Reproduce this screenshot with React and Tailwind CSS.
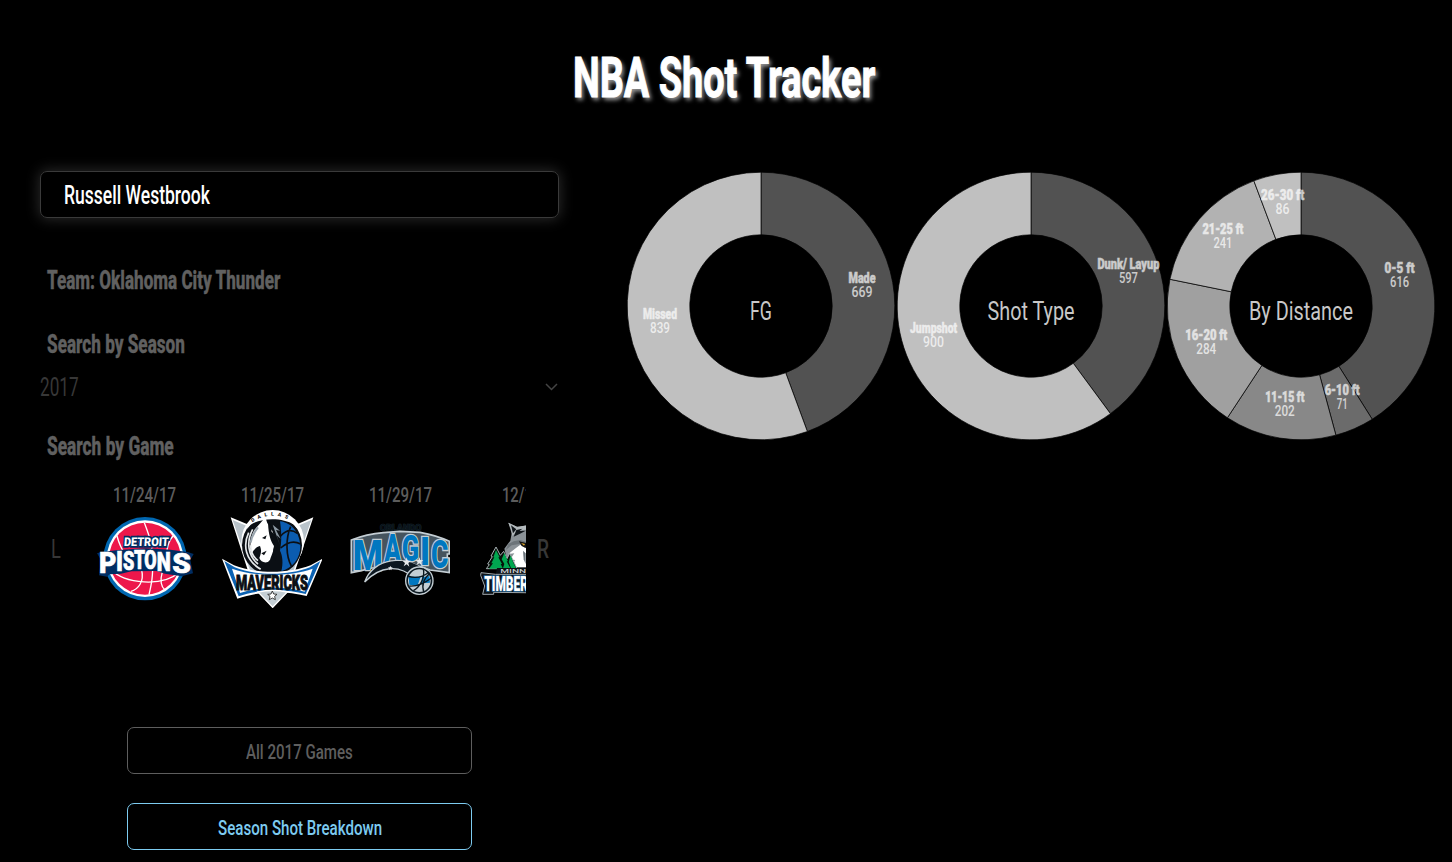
import { useLayoutEffect, useRef, useState } from "react";

/* One line of text condensed horizontally to a given width. */
function Condensed({ children, width, className = "" }) {
  const ref = useRef(null);
  const [scale, setScale] = useState(1);
  useLayoutEffect(() => {
    setScale(width / ref.current.offsetWidth);
  }, [width, children]);
  return (
    <span className={`block whitespace-nowrap ${className}`} style={{ width }}>
      <span ref={ref} className="inline-block origin-left" style={{ transform: `scaleX(${scale})` }}>
        {children}
      </span>
    </span>
  );
}

const C = 135;
const OUTER = 133.8;
const INNER = 71.2;

function arcPath(a0, a1) {
  const p = (r, a) => `${(C + r * Math.sin(a)).toFixed(2)} ${(C - r * Math.cos(a)).toFixed(2)}`;
  const large = a1 - a0 > Math.PI ? 1 : 0;
  return `M${p(OUTER, a0)}A${OUTER} ${OUTER} 0 ${large} 1 ${p(OUTER, a1)}L${p(INNER, a1)}A${INNER} ${INNER} 0 ${large} 0 ${p(INNER, a0)}Z`;
}

function SvgLabel({ x, y, width, size, weight, fill, stroke, children }) {
  return (
    <text
      x={x - width / 2}
      y={y}
      textLength={width}
      lengthAdjust="spacingAndGlyphs"
      fontSize={size}
      fontWeight={weight}
      fill={fill}
      stroke={stroke}
      strokeWidth={stroke ? 0.5 : 0}
    >
      {children}
    </text>
  );
}

function Donut({ title, titleWidth, slices }) {
  const total = slices.reduce((s, d) => s + d.value, 0);
  let angle = 0;
  const arcs = slices.map((d) => {
    const start = angle;
    angle += (d.value / total) * Math.PI * 2;
    return { ...d, start, end: angle };
  });
  return (
    <svg width="270" height="270" viewBox="0 0 270 270" className="block shrink-0 font-['Roboto',sans-serif]">
      {arcs.map((d) => (
        <path key={d.label} d={arcPath(d.start, d.end)} fill={d.color} stroke="#000" strokeWidth="0.7" />
      ))}
      {arcs.map((d) => {
        const mid = (d.start + d.end) / 2;
        const x = C + 102.6 * Math.sin(mid);
        const y = C - 102.6 * Math.cos(mid);
        return (
          <g key={d.label} opacity="0.7">
            <SvgLabel x={x} y={y - 5} width={d.width} size={15} weight={900} fill="#fff" stroke="#fff">{d.label}</SvgLabel>
            <SvgLabel x={x} y={y + 9} width={d.numWidth} size={15} weight={500} fill="#fff">{d.value}</SvgLabel>
          </g>
        );
      })}
      <SvgLabel x={C} y={148.7} width={titleWidth} size={26} weight={400} fill="#c8c8c8">{title}</SvgLabel>
    </svg>
  );
}

const charts = [
  {
    title: "FG",
    titleWidth: 22,
    slices: [
      { label: "Made", value: 669, color: "#525252", width: 27, numWidth: 21 },
      { label: "Missed", value: 839, color: "#c0c0c0", width: 34, numWidth: 20 },
    ],
  },
  {
    title: "Shot Type",
    titleWidth: 87,
    slices: [
      { label: "Dunk/ Layup", value: 597, color: "#525252", width: 62, numWidth: 19 },
      { label: "Jumpshot", value: 900, color: "#c0c0c0", width: 47, numWidth: 21 },
    ],
  },
  {
    title: "By Distance",
    titleWidth: 104,
    slices: [
      { label: "0-5 ft", value: 616, color: "#525252", width: 30, numWidth: 19 },
      { label: "6-10 ft", value: 71, color: "#6b6b6b", width: 35, numWidth: 11 },
      { label: "11-15 ft", value: 202, color: "#888888", width: 39, numWidth: 20 },
      { label: "16-20 ft", value: 284, color: "#a0a0a0", width: 42, numWidth: 20 },
      { label: "21-25 ft", value: 241, color: "#b2b2b2", width: 41, numWidth: 19 },
      { label: "26-30 ft", value: 86, color: "#c0c0c0", width: 43, numWidth: 14 },
    ],
  },
];

/* Text squeezed to a width, with an outline behind its fill. */
function Word({ x, y, w, size, stroke, sw, fill = "#fff", children, ...rest }) {
  return (
    <text
      x={x}
      y={y}
      textLength={w}
      lengthAdjust="spacingAndGlyphs"
      fontSize={size}
      fontWeight="900"
      fill={fill}
      stroke={stroke}
      strokeWidth={sw}
      strokeLinejoin="miter"
      paintOrder="stroke"
      {...rest}
    >
      {children}
    </text>
  );
}

const logoClass = "block size-[100px] font-['Roboto',sans-serif]";

function Pistons() {
  const row = [
    ["P", 42, 280, 52, 90],
    ["I", 93, 274, 21, 84],
    ["S", 114, 270, 34, 78],
    ["T", 147, 266, 33, 75],
    ["O", 178, 267, 37, 76],
    ["N", 215, 273, 42, 80],
    ["S", 262, 279, 56, 84],
  ];
  return (
    <svg viewBox="27 84 300 300" className={logoClass}>
      <circle cx="180" cy="236" r="125" fill="#0067b1" />
      <circle cx="180" cy="236" r="115" fill="#fff" />
      <circle cx="180" cy="236" r="108" fill="#ed174b" />
      <g fill="none" stroke="#fff" strokeWidth="4">
        <path d="M178 128C192 165 202 190 203 240S200 310 192 344" />
        <path d="M96 168C102 190 108 205 120 222M264 168C254 180 248 195 246 210" />
        <path d="M76 268C120 312 232 322 284 276" />
        <path d="M170 270C178 305 160 328 138 334M232 275C224 305 230 322 240 330" />
      </g>
      <path d="M36 220L50 216L100 210L182 205L256 209L308 216L326 222L316 240L324 280L290 289L240 281L214 273L140 274L108 281L74 283L66 290L42 286L48 240Z" fill="#002d62" />
      <g transform="skewX(-4) translate(14 0)">
        <Word x="116" y="197" w="134" size="36" stroke="#002d62" sw="10">DETROIT</Word>
      </g>
      {row.map(([ch, x, y, w, size], i) => (
        <Word key={i} x={x} y={y} w={w} size={size} stroke="#fff" sw="2">{ch}</Word>
      ))}
    </svg>
  );
}

function Mavericks() {
  return (
    <svg viewBox="30 84 300 300" className={logoClass}>
      <path d="M56 112L128 142H234L304 112L240 300L182 382L120 310Z" fill="#fff" />
      <path d="M62 120L128 148H234L298 120L236 296L182 374L124 300Z" fill="#b9c3ca" />
      <circle cx="182" cy="184" r="94" fill="#fff" />
      <circle cx="180" cy="196" r="90" fill="#0b0f14" />
      <path d="M116 134C148 112 214 112 246 134L262 152L244 120C204 84 160 84 118 120L104 148Z" fill="#fff" />
      <path d="M204 124C240 128 264 160 265 198C266 236 240 264 208 274C214 250 212 228 204 212C210 184 208 150 204 124Z" fill="#0b5cb0" />
      <g fill="none" stroke="#0b0f14" strokeWidth="5">
        <path d="M206 168C222 150 240 148 256 160M206 204C228 184 248 182 266 192M236 140C220 176 222 230 238 258" />
      </g>
      <path d="M146 128L160 112L166 130C180 144 188 166 188 190C186 214 178 226 174 240C164 254 146 246 142 234C146 222 150 214 144 198C134 200 126 208 118 222C112 198 116 160 132 144Z" fill="#fff" />
      <path d="M168 130L182 140L178 154C192 166 200 188 194 206C188 220 196 232 190 242C182 228 182 212 186 198C176 184 170 166 168 130Z" fill="#0b0f14" />
      <path d="M182 134L204 152L192 150L206 176L194 166L204 196Z" fill="#8d99a3" />
      <path d="M150 174L164 166L160 178ZM148 220L164 212L156 226ZM166 250L174 240L172 256Z" fill="#0b0f14" />
      <g fill="none" stroke="#e7eaec" strokeWidth="5">
        <path d="M110 158C92 196 100 240 146 268M122 148C102 186 108 228 138 252M116 196C116 214 122 230 138 242" />
        <path d="M138 142C124 160 118 172 116 188" stroke="#9aa5ae" strokeWidth="6" />
      </g>
      <path id="mavArc" d="M114 132Q182 82 250 132" fill="none" />
      <text fontSize="15" fontWeight="900" fill="#111" letterSpacing="11">
        <textPath href="#mavArc" startOffset="8">DALLAS</textPath>
      </text>
      <path d="M30 236L66 256C130 282 230 282 296 256L332 236L284 348C220 332 146 332 76 356Z" fill="#fff" />
      <path d="M37 243L68 262C130 288 230 288 294 262L325 243L281 342C220 326 146 326 80 349Z" fill="#0b62b3" />
      <path d="M60 266C130 291 230 291 302 266L278 335C220 319 146 319 84 339Z" fill="#fff" />
      <Word x="72" y="329" w="216" size="62" stroke="#0b0f14" sw="3" fill="#0b0f14">MAVERICKS</Word>
      <path d="M138 336C168 330 196 330 226 336L182 382Z" fill="#c4ced4" stroke="#fff" strokeWidth="4" />
      <path d="M181 333L185 342L195 343L188 349L190 359L181 354L172 359L174 349L167 343L177 342Z" fill="#fff" stroke="#222" strokeWidth="2.5" />
    </svg>
  );
}

function Magic() {
  const row = [
    ["M", 38, 269, 90, 126],
    ["A", 133, 246, 50, 114],
    ["G", 185, 243, 52, 108],
    ["I", 240, 255, 30, 116],
    ["C", 273, 264, 52, 116],
  ];
  return (
    <svg viewBox="30 84 300 300" className={logoClass}>
      <Word x="120" y="152" w="124" size="26" stroke="#1c2c36" sw="2" fill="#0a141b">ORLANDO</Word>
      <path d="M34 180Q80 162 130 158L180 154L240 157Q290 166 328 184V222H322V234H328V278L270 270L240 260L184 246L130 250L126 264L96 264L64 272L34 278Z" fill="#46545e" stroke="#c4ced4" strokeWidth="5" />
      {row.map(([ch, x, y, w, size], i) => (
        <Word key={i} x={x} y={y} w={w} size={size} stroke="#c4ced4" sw="8" fill="#0077c0">{ch}</Word>
      ))}
      <path d="M74 306C100 234 196 218 264 280L222 294C178 252 120 258 74 306Z" fill="#0c1720" stroke="#c4ced4" strokeWidth="4" />
      <path d="M134 254C174 234 226 240 258 276L228 288C198 258 168 252 134 254Z" fill="#0c1720" />
      <circle cx="238" cy="302" r="41" fill="#0b1820" stroke="#c4ced4" strokeWidth="4" />
      <circle cx="238" cy="302" r="34" fill="#c4ced4" />
      <path d="M206 290L242 290L232 318L208 314ZM246 292L268 288L270 308L244 310Z" fill="#0077c0" />
      <g fill="none" stroke="#0b1820" strokeWidth="4">
        <path d="M202 288C225 296 250 290 268 276M208 318C236 320 256 308 274 294M250 266C256 296 238 322 220 332M270 280C246 300 246 322 252 338" />
      </g>
      <path
        d="M200 232L203 242L213 242L205 249L208 260L200 253L191 259L195 249L187 242L197 242ZM238 232L241 240L250 241L243 246L245 255L238 250L230 255L233 246L226 241L235 240ZM151 257L153 262L158 262L154 266L155 271L151 268L147 271L148 266L144 262L149 262Z"
        fill="#e4e8ea"
      />
    </svg>
  );
}

function Timberwolves() {
  return (
    <svg viewBox="39 84 300 300" className={logoClass}>
      <path d="M130 128L158 142L204 132L240 150L260 220L240 262H132L118 206L136 182L140 160Z" fill="#8b9297" />
      <path d="M130 128L156 140L184 136L204 132V148L172 150L150 160L142 168L138 148Z" fill="#b4babd" />
      <path d="M138 136L154 148L144 160ZM154 150L172 146L164 153L182 152L168 160L146 170Z" fill="#101519" />
      <path d="M150 206L166 194L182 204L200 196V262H140L150 240L136 238L148 220L130 222Z" fill="#fff" />
      <path d="M146 184L166 180L186 186L182 196L164 192L140 196L122 210L130 192Z" fill="#6d757a" />
      <path d="M162 184L186 190L182 204L170 198Z" fill="#111" />
      <path d="M168 189L180 192L177 197Z" fill="#e0a92d" />
      <path d="M174 212L182 220V252L176 238Z" fill="#69737a" />
      <path d="M93 201L106 226L116 214L126 236L134 220L156 266H64L73 254L68 252L82 230L78 228Z" fill="#061009" stroke="#a7afb3" strokeWidth="3" />
      <path d="M93 210L104 232L100 232L111 252L107 252L114 266H72L84 250L79 250L88 232L85 232ZM118 219L129 244L125 244L136 264H114L118 252L110 238ZM137 226L144 246L153 264H138L131 246Z" fill="#00a650" />
      <path d="M96 264H300V286H92Z" fill="#0b1014" />
      <Word x="106" y="279" w="170" size="14" stroke="#0b1014" sw="1" fill="#c8cdd0" fontWeight="500">MINNESOTA</Word>
      <path d="M48 278L92 283H330V340L86 337V343H53L59 318L47 286Z" fill="#0d1317" stroke="#9ea7ac" strokeWidth="3" />
      <Word x="58" y="332" w="268" size="60" stroke="#23577f" sw="6">TIMBERWOLVES</Word>
    </svg>
  );
}

const games = [
  { date: "11/24/17", width: 63, Logo: Pistons },
  { date: "11/25/17", width: 63, Logo: Mavericks },
  { date: "11/29/17", width: 63, Logo: Magic },
  { date: "12/1/17", width: 53, Logo: Timberwolves },
];

const headingClass = "ml-[7px] h-8 text-[25.6px] leading-8 font-extrabold text-[#606060] [-webkit-text-stroke:0.4px_#606060]";

export default function App() {
  return (
    <div className="h-[862px] w-full overflow-hidden bg-black font-['Roboto',sans-serif]">
      <header className="flex h-[171px] justify-center pt-[44px] pr-[4px]">
        <h1 className="h-[68px] text-[55px] leading-[68px] font-bold text-white [-webkit-text-stroke:1px_#fff] [text-shadow:3px_3px_5px_#999]">
          <Condensed width={302}>NBA Shot Tracker</Condensed>
        </h1>
      </header>

      <main className="flex">
        <section className="ml-10 w-[519px] shrink-0">
          <div className="flex h-[47px] items-center rounded-[7px] border border-[#3a3a3a] pt-0.5 pl-[23px] text-[25.6px] font-medium text-white shadow-[0_0_14px_1px_rgba(255,255,255,0.17)]">
            <Condensed width={146}>Russell Westbrook</Condensed>
          </div>

          <h2 className={`mt-[46px] ${headingClass}`}>
            <Condensed width={233}>Team: Oklahoma City Thunder</Condensed>
          </h2>
          <h2 className={`mt-8 ${headingClass}`}>
            <Condensed width={138}>Search by Season</Condensed>
          </h2>

          <div className="mt-[11px] flex h-8 items-center justify-between text-[25.6px] leading-8 text-[#373737]">
            <Condensed width={39}>2017</Condensed>
            <svg width="15" height="10" viewBox="0 0 15 10" fill="none" stroke="#444" strokeWidth="1.5">
              <path d="M2 2L7.5 7.5L13 2" />
            </svg>
          </div>

          <h2 className={`mt-[27px] ${headingClass}`}>
            <Condensed width={127}>Search by Game</Condensed>
          </h2>

          <div className="mt-[21px] flex h-[126px] text-[25.6px] leading-8 text-[#373737]">
            <button className="w-10 pt-[6px] pl-[11px]">
              <Condensed width={10}>L</Condensed>
            </button>
            <div className="flex w-[446px] overflow-hidden">
              {games.map(({ date, width, Logo }) => (
                <div key={date} className="flex w-32 shrink-0 flex-col items-center text-[20.8px] leading-[25px] font-medium text-[#5c5c5c]">
                  <Condensed width={width}>{date}</Condensed>
                  <Logo />
                </div>
              ))}
            </div>
            <button className="w-[33px] pt-[6px] pl-[11px] font-medium">
              <Condensed width={12}>R</Condensed>
            </button>
          </div>

          <div className="mt-[118px] flex flex-col items-center gap-[29px] text-[21px] font-medium">
            <button className="flex h-[47px] w-[345px] items-center justify-center rounded-[7px] border border-[#5e5e5e] pt-[4px] text-[#5e5e5e]">
              <Condensed width={107}>All 2017 Games</Condensed>
            </button>
            <button className="flex h-[47px] w-[345px] items-center justify-center rounded-[7px] border border-[#7dcbf0] pt-[4px] text-[#7dcbf0]">
              <Condensed width={164}>Season Shot Breakdown</Condensed>
            </button>
          </div>
        </section>

        <section className="ml-[67px] flex">
          {charts.map((c) => (
            <Donut key={c.title} {...c} />
          ))}
        </section>
      </main>
    </div>
  );
}
